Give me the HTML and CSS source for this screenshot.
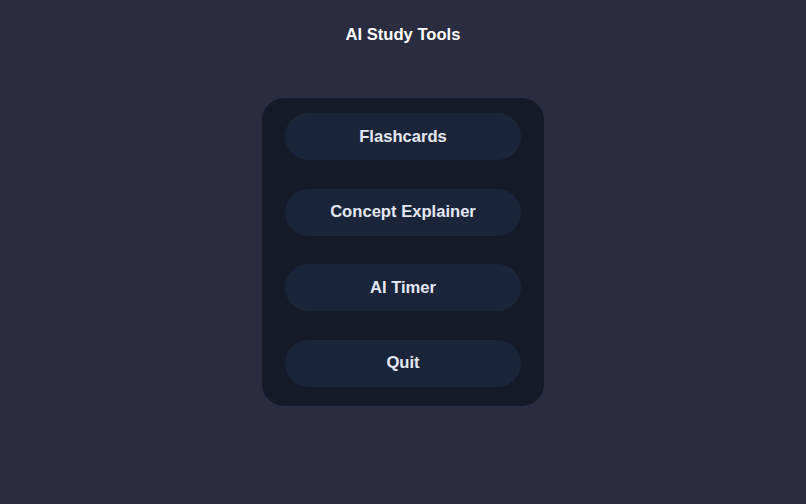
FILE: index.html
```html
<!DOCTYPE html>
<html lang="en">
<head>
    <meta charset="UTF-8">
    <title>AI Study Tools</title>
    <link rel="stylesheet" href="styles.css">
</head>
<body>
<div class="app">
    <h1 class="title">AI Study Tools</h1>
    <div class="menu">
        <button class="menu__btn">Flashcards</button>
        <button class="menu__btn">Concept Explainer</button>
        <button class="menu__btn">AI Timer</button>
        <button class="menu__btn">Quit</button>
    </div>
</div>
</body>
</html>
```

FILE: styles.css
```css
html, body {
    margin: 0;
    height: 100%;
    background: #2a2c40;
}

.app {
    display: flex;
    flex-direction: column;
    align-items: center;
    font-family: "Liberation Sans", Arial, sans-serif;
}

.title {
    margin: 0;
    padding-top: 25px;
    font-size: 16.6px;
    line-height: 20px;
    font-weight: bold;
    color: #ffffff;
}

.menu {
    margin-top: 53px;
    width: 282px;
    box-sizing: border-box;
    padding: 15px 23px 19px;
    background: #151a27;
    border-radius: 22px;
    display: flex;
    flex-direction: column;
    gap: 28.5px;
}

.menu__btn {
    height: 47px;
    border: none;
    border-radius: 24px;
    background: #1b2539;
    color: #e3e8f2;
    font-family: inherit;
    font-size: 16.6px;
    font-weight: bold;
    cursor: pointer;
}
```
